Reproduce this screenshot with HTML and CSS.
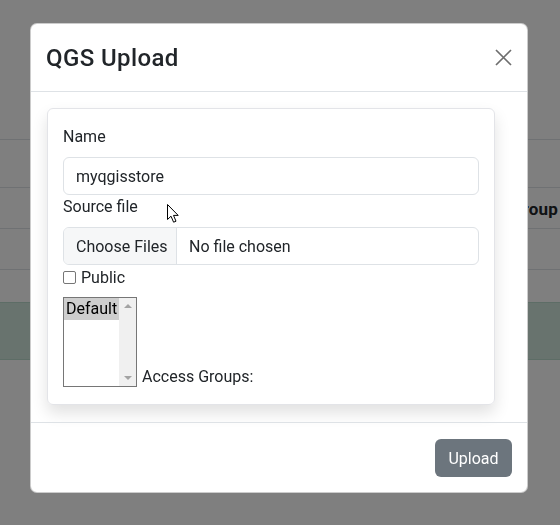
FILE: index.html
```html
<!DOCTYPE html>
<html>
<head>
<meta charset="utf-8">
<link rel="stylesheet" href="styles.css">
</head>
<body>
<div class="page">
  <div class="row row-top"></div>
  <div class="row row-a"></div>
  <div class="row row-head"><span class="th">Access Group</span></div>
  <div class="row row-b"></div>
  <div class="row row-gap"></div>
  <div class="row row-success"></div>
</div>
<div class="backdrop"></div>
<div class="modal">
  <div class="modal-header">
    <h4 class="modal-title">QGS Upload</h4>
    <button class="btn-close" aria-label="Close">
      <svg width="17" height="17" viewBox="0 0 17 17"><path d="M1 1 L16 16 M16 1 L1 16" stroke="#6e6e6e" stroke-width="1.7" fill="none"/></svg>
    </button>
  </div>
  <div class="modal-body">
    <div class="card">
      <label class="form-label">Name</label>
      <div class="form-control">myqgisstore</div>
      <label class="form-label">Source file</label>
      <div class="file-input">
        <span class="file-btn">Choose Files</span>
        <span class="file-name">No file chosen</span>
      </div>
      <div class="check-row">
        <span class="checkbox"></span>
        <span>Public</span>
      </div>
      <div class="select-row">
        <div class="listbox">
          <div class="options">
            <div class="option selected">Default</div>
          </div>
          <div class="scrollbar">
            <span class="arrow-up"></span>
            <span class="arrow-down"></span>
          </div>
        </div>
        <span class="select-label">Access Groups:</span>
      </div>
    </div>
  </div>
  <div class="modal-footer">
    <button class="btn-upload">Upload</button>
  </div>
</div>
<svg class="cursor" width="13" height="20" viewBox="0 0 13 20"><path d="M0.5 0.5 L0.5 15.5 L4 12.2 L6.6 18.2 L9 17.2 L6.5 11.4 L11.2 11.4 Z" fill="#fff" stroke="#000" stroke-width="1" stroke-linejoin="miter"/></svg>
</body>
</html>
```
FILE: styles.css
```css
* { box-sizing: border-box; }
html, body {
  margin: 0;
  padding: 0;
}
body {
  width: 560px;
  height: 525px;
  position: relative;
  overflow: hidden;
  background: #fff;
  font-family: Roboto, "Liberation Sans", sans-serif;
  font-size: 16px;
  color: #212529;
}
.page {
  display: flex;
  flex-direction: column;
}
.row {
  border-bottom: 1px solid #dee2e6;
}
.row-top { height: 140px; }
.row-a { height: 48px; }
.row-head {
  height: 41px;
  display: flex;
  align-items: center;
  justify-content: flex-end;
  padding-right: 2px;
  padding-top: 2px;
}
.th {
  font-weight: 700;
  font-size: 17px;
  letter-spacing: 0.2px;
  color: #212529;
}
.row-b { height: 41px; }
.row-gap { height: 32px; border-bottom: none; }
.row-success {
  height: 58px;
  background: #d1e7dd;
  border-top: 1px solid #badbcc;
  border-bottom: 1px solid #badbcc;
}
.backdrop {
  position: fixed;
  inset: 0;
  background: #000;
  opacity: 0.5;
}
.modal {
  position: absolute;
  left: 30px;
  top: 23px;
  width: 498px;
  height: 470px;
  background: #fff;
  border-radius: 7px;
  border: 1px solid rgba(0,0,0,0.2);
  display: flex;
  flex-direction: column;
  overflow: hidden;
}
.modal-header {
  display: flex;
  align-items: center;
  justify-content: space-between;
  padding: 16px 15px 16px 15px;
  border-bottom: 1px solid #dee2e6;
}
.modal-title {
  margin: 0;
  font-size: 24px;
  font-weight: 500;
  line-height: 35px;
  letter-spacing: 0.4px;
  position: relative;
  top: 1px;
}
.btn-close {
  border: none;
  background: none;
  padding: 0;
  width: 17px;
  height: 17px;
  display: flex;
}
.modal-body {
  padding: 16px 32px 17px 16px;
}
.card {
  width: 448px;
  border: 1px solid #e3e4e8;
  border-radius: 6px;
  padding: 16px 15px 17px 15px;
  box-shadow: 0 8px 16px rgba(0,0,0,0.12);
  display: flex;
  flex-direction: column;
}
.form-label {
  display: block;
  line-height: 24px;
  margin-bottom: 8px;
}
.form-control {
  height: 38px;
  border: 1px solid #dee2e6;
  border-radius: 6px;
  padding: 0 12px;
  display: flex;
  align-items: center;
}
.file-input {
  height: 38px;
  border: 1px solid #dee2e6;
  border-radius: 6px;
  display: flex;
  overflow: hidden;
}
.file-btn {
  background: #f6f7f8;
  border-right: 1px solid #dee2e6;
  padding: 0 12px;
  width: 113px;
  flex-shrink: 0;
  white-space: nowrap;
  display: flex;
  align-items: center;
}
.file-name {
  padding: 0 12px;
  white-space: nowrap;
  display: flex;
  align-items: center;
}
.check-row {
  display: flex;
  align-items: center;
  height: 24px;
}
.checkbox {
  width: 13px;
  height: 13px;
  border: 1px solid #767676;
  border-radius: 2px;
  margin-right: 5px;
  background: #fff;
}
.select-row {
  margin-top: 8px;
  display: flex;
  align-items: flex-end;
}
.listbox {
  width: 74px;
  height: 90px;
  border: 1px solid #767676;
  display: flex;
}
.options {
  flex: 1;
}
.option {
  line-height: 22px;
  height: 22px;
  padding-left: 2px;
  color: #000;
}
.option.selected {
  background: #cecece;
}
.scrollbar {
  width: 17px;
  background: #f0f0f0;
  display: flex;
  flex-direction: column;
  justify-content: space-between;
  align-items: center;
  padding: 6px 0 6px 0;
}
.arrow-up, .arrow-down {
  width: 0;
  height: 0;
  border-left: 4px solid transparent;
  border-right: 4px solid transparent;
}
.arrow-up { border-bottom: 4px solid #a3a3a3; }
.arrow-down { border-top: 4px solid #a3a3a3; }
.select-label {
  margin-left: 5px;
  line-height: 20px;
}
.modal-footer {
  margin-top: auto;
  border-top: 1px solid #dee2e6;
  padding: 16px 15px 15px 15px;
  display: flex;
  justify-content: flex-end;
}
.btn-upload {
  background: #6c757d;
  color: #fff;
  border: none;
  border-radius: 6px;
  height: 38px;
  width: 77px;
  font-family: inherit;
  font-size: 16px;
  padding: 0;
}
.cursor {
  position: absolute;
  left: 167px;
  top: 204px;
}
```
